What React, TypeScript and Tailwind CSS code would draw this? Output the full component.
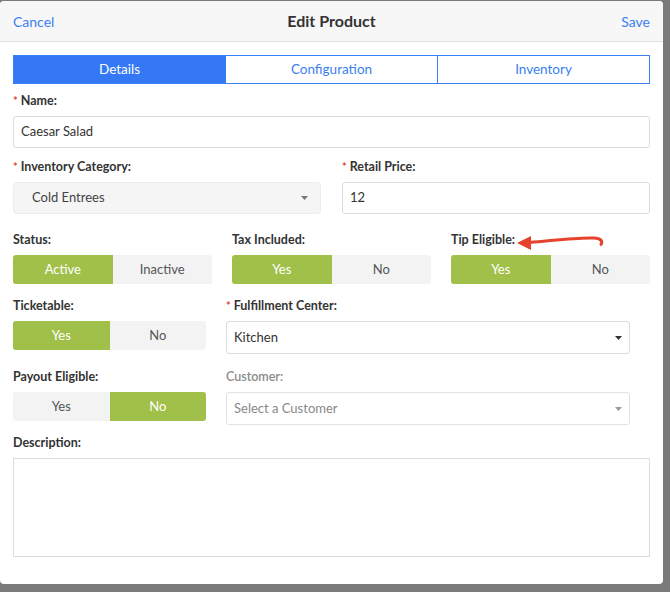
import React from 'react';

const font = { fontFamily: 'Lato, "Open Sans", sans-serif' };

function Label({ children, required, muted }: { children: React.ReactNode; required?: boolean; muted?: boolean }) {
  return (
    <div className={`h-[15px] flex items-center text-[12.5px] mb-[7px] ${muted ? 'text-[#8a8a8a] font-semibold' : 'text-[#333] font-bold'}`}>
      {required && <span className="text-[#e0483b] mr-[3px] text-[11px]">*</span>}
      {children}
    </div>
  );
}

function Toggle({ options, active, className }: { options: string[]; active: number; className: string }) {
  return (
    <div className={`flex h-[29px] rounded-[3px] overflow-hidden bg-[#f3f3f3] ${className}`}>
      {options.map((o, i) => (
        <div
          key={o}
          className={`flex-1 flex items-center justify-center text-[13px] ${i === active ? 'bg-[#a1c04a] text-white' : 'text-[#555]'}`}
        >
          {o}
        </div>
      ))}
    </div>
  );
}

function Caret({ color = '#444' }: { color?: string }) {
  return (
    <svg width="7" height="4" viewBox="0 0 7 4">
      <path d="M0 0h7L3.5 4z" fill={color} />
    </svg>
  );
}

export default function App() {
  return (
    <div className="w-[670px] h-[592px] bg-[#7a7a7a] pt-[1px]" style={font}>
      <div className="relative w-[663px] h-[583px] bg-white rounded-[4px] overflow-hidden">
        {/* header */}
        <div className="h-[41px] bg-[#f7f7f7] border-b border-[#e2e2e2] flex items-center justify-between px-[13px]">
          <span className="text-[#3b7ff0] text-[14px] w-[60px]">Cancel</span>
          <span className="text-[#333] text-[16px] font-bold">Edit Product</span>
          <span className="text-[#3b7ff0] text-[14px] w-[60px] text-right">Save</span>
        </div>

        <div className="px-[13px] pt-[13px]">
          {/* tabs */}
          <div className="flex h-[29px] border border-[#3b7ff0]">
            <div className="flex-1 flex items-center justify-center bg-[#3478f6] text-white text-[13.5px]">Details</div>
            <div className="flex-1 flex items-center justify-center text-[#3b7ff0] text-[13.5px] border-l border-[#3b7ff0]">Configuration</div>
            <div className="flex-1 flex items-center justify-center text-[#3b7ff0] text-[13.5px] border-l border-[#3b7ff0]">Inventory</div>
          </div>

          {/* name */}
          <div className="mt-[10px]">
            <Label required>Name:</Label>
            <div className="h-[32px] border border-[#dcdcdc] rounded-[3px] flex items-center px-[7px] text-[13px] text-[#333]">Caesar Salad</div>
          </div>

          {/* category + price */}
          <div className="flex gap-[21px] mt-[12px]">
            <div className="w-[308px]">
              <Label required>Inventory Category:</Label>
              <div className="h-[32px] bg-[#f5f5f5] border border-[#ececec] rounded-[4px] flex items-center justify-between pl-[18px] pr-[12px] text-[13px] text-[#444]">
                Cold Entrees
                <Caret color="#777" />
              </div>
            </div>
            <div className="w-[308px]">
              <Label required>Retail Price:</Label>
              <div className="h-[32px] border border-[#dcdcdc] rounded-[3px] flex items-center px-[7px] text-[13px] text-[#333]">12</div>
            </div>
          </div>

          {/* status row */}
          <div className="flex gap-[20px] mt-[19px]">
            <div className="w-[199px]">
              <Label>Status:</Label>
              <Toggle options={['Active', 'Inactive']} active={0} className="w-[199px]" />
            </div>
            <div className="w-[199px]">
              <Label>Tax Included:</Label>
              <Toggle options={['Yes', 'No']} active={0} className="w-[199px]" />
            </div>
            <div className="w-[199px]">
              <Label>Tip Eligible:</Label>
              <Toggle options={['Yes', 'No']} active={0} className="w-[199px]" />
            </div>
          </div>

          {/* ticketable row */}
          <div className="flex gap-[20px] mt-[15px]">
            <div className="w-[193px]">
              <Label>Ticketable:</Label>
              <Toggle options={['Yes', 'No']} active={0} className="w-[193px]" />
            </div>
            <div className="w-[404px]">
              <Label required>Fulfillment Center:</Label>
              <div className="h-[33px] border border-[#dcdcdc] rounded-[3px] flex items-center justify-between px-[7px] text-[13px] text-[#333]">
                Kitchen
                <Caret color="#333" />
              </div>
            </div>
          </div>

          {/* payout row */}
          <div className="flex gap-[20px] mt-[16px]">
            <div className="w-[193px]">
              <Label>Payout Eligible:</Label>
              <Toggle options={['Yes', 'No']} active={1} className="w-[193px]" />
            </div>
            <div className="w-[404px]">
              <Label muted>Customer:</Label>
              <div className="h-[33px] border border-[#e2e2e2] rounded-[3px] flex items-center justify-between px-[7px] text-[13px] text-[#888]">
                Select a Customer
                <Caret color="#999" />
              </div>
            </div>
          </div>

          {/* description */}
          <div className="mt-[11px]">
            <Label>Description:</Label>
            <div className="h-[99px] border border-[#dcdcdc]" />
          </div>
        </div>

        {/* annotation arrow */}
        <svg className="absolute left-[510px] top-[230px]" width="100" height="24" viewBox="0 0 100 24">
          <path d="M20 11.5 C 40 10, 68 6, 84 7 C 91 7.5, 93 10, 91 13.5" stroke="#e5432d" strokeWidth="3" fill="none" strokeLinecap="round" />
          <path d="M7 12 L 21 5 L 21 19 Z" fill="#e5432d" strokeLinejoin="round" />
        </svg>
      </div>
    </div>
  );
}
